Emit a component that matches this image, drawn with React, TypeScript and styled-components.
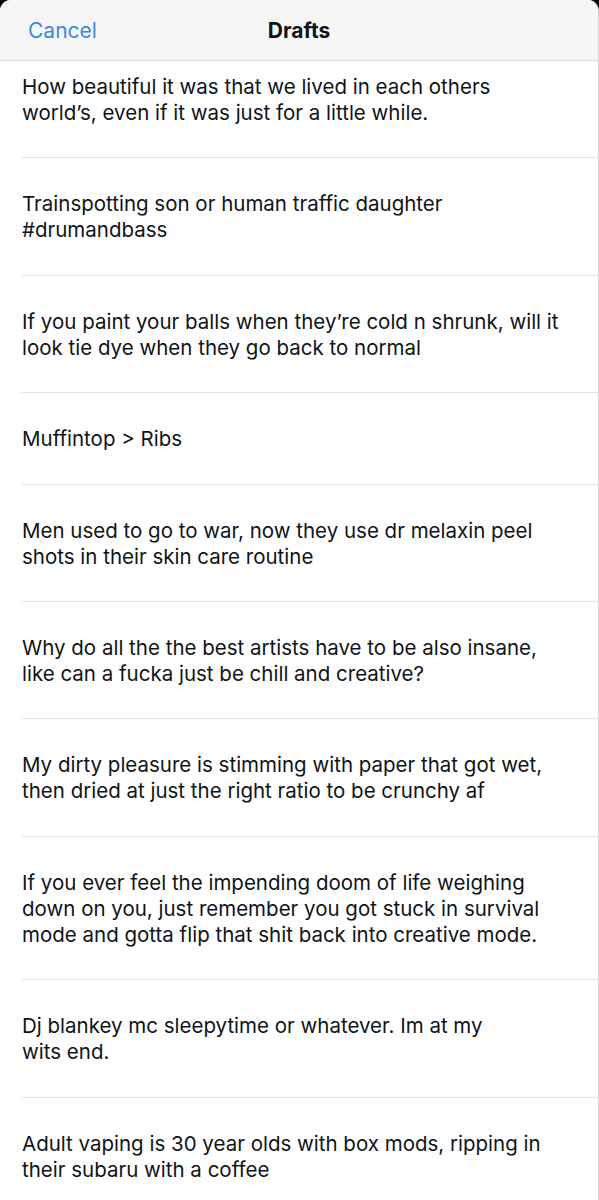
import styled, { createGlobalStyle } from 'styled-components';

const DRAFTS = [
	'How beautiful it was that we lived in each others\nworld’s, even if it was just for a little while.',
	'Trainspotting son or human traffic daughter\n#drumandbass',
	'If you paint your balls when they’re cold n shrunk, will it\nlook tie dye when they go back to normal',
	'Muffintop > Ribs',
	'Men used to go to war, now they use dr melaxin peel\nshots in their skin care routine',
	'Why do all the the best artists have to be also insane,\nlike can a fucka just be chill and creative?',
	'My dirty pleasure is stimming with paper that got wet,\nthen dried at just the right ratio to be crunchy af',
	'If you ever feel the impending doom of life weighing\ndown on you, just remember you got stuck in survival\nmode and gotta flip that shit back into creative mode.',
	'Dj blankey mc sleepytime or whatever. Im at my\nwits end.',
	'Adult vaping is 30 year olds with box mods, ripping in\ntheir subaru with a coffee',
];

const GlobalStyle = createGlobalStyle`
	html, body {
		margin: 0;
		padding: 0;
		background: #000;
	}
	body {
		font-family: Inter, 'Noto Sans', sans-serif;
		-webkit-font-smoothing: antialiased;
	}
`;

const App = () => {
	return (
		<>
			<GlobalStyle />
			<Sheet>
				<Header>
					<CancelButton>Cancel</CancelButton>
					<Title>Drafts</Title>
				</Header>
				<List>
					{DRAFTS.map((text, i) => (
						<Row key={i} first={i === 0}>
							<DraftText>{text}</DraftText>
						</Row>
					))}
				</List>
			</Sheet>
		</>
	);
};

const Sheet = styled.div`
	width: 598px;
	height: 1200px;
	overflow: hidden;
	background: #fff;
	border-radius: 11px 11px 0 0;
	border-right: 1px solid #d4d4d4;
	display: flex;
	flex-direction: column;
`;

const Header = styled.header`
	position: relative;
	height: 60px;
	flex-shrink: 0;
	background: #f6f6f6;
	border-bottom: 1px solid #dcdcdf;
	display: flex;
	align-items: center;
	justify-content: center;
`;

const CancelButton = styled.button`
	position: absolute;
	left: 28px;
	top: 50%;
	transform: translateY(-50%);
	border: none;
	background: none;
	padding: 0;
	font-family: Inter, 'Noto Sans', sans-serif;
	font-size: 21px;
	color: #3a8ae0;
`;

const Title = styled.h1`
	margin: 0;
	font-size: 21px;
	font-weight: 700;
	color: #0f1419;
`;

const List = styled.ul`
	list-style: none;
	margin: 0;
	padding: 0 0 0 21px;
`;

const Row = styled.li<{ first?: boolean }>`
	padding: ${({ first }) => (first ? '13px' : '33px')} 0 31.4px 1px;
	border-bottom: 1px solid #e3e3e8;
`;

const DraftText = styled.p`
	margin: 0;
	white-space: pre-line;
	font-size: 20.5px;
	line-height: 26px;
	color: #0f1419;
`;

export default App;
